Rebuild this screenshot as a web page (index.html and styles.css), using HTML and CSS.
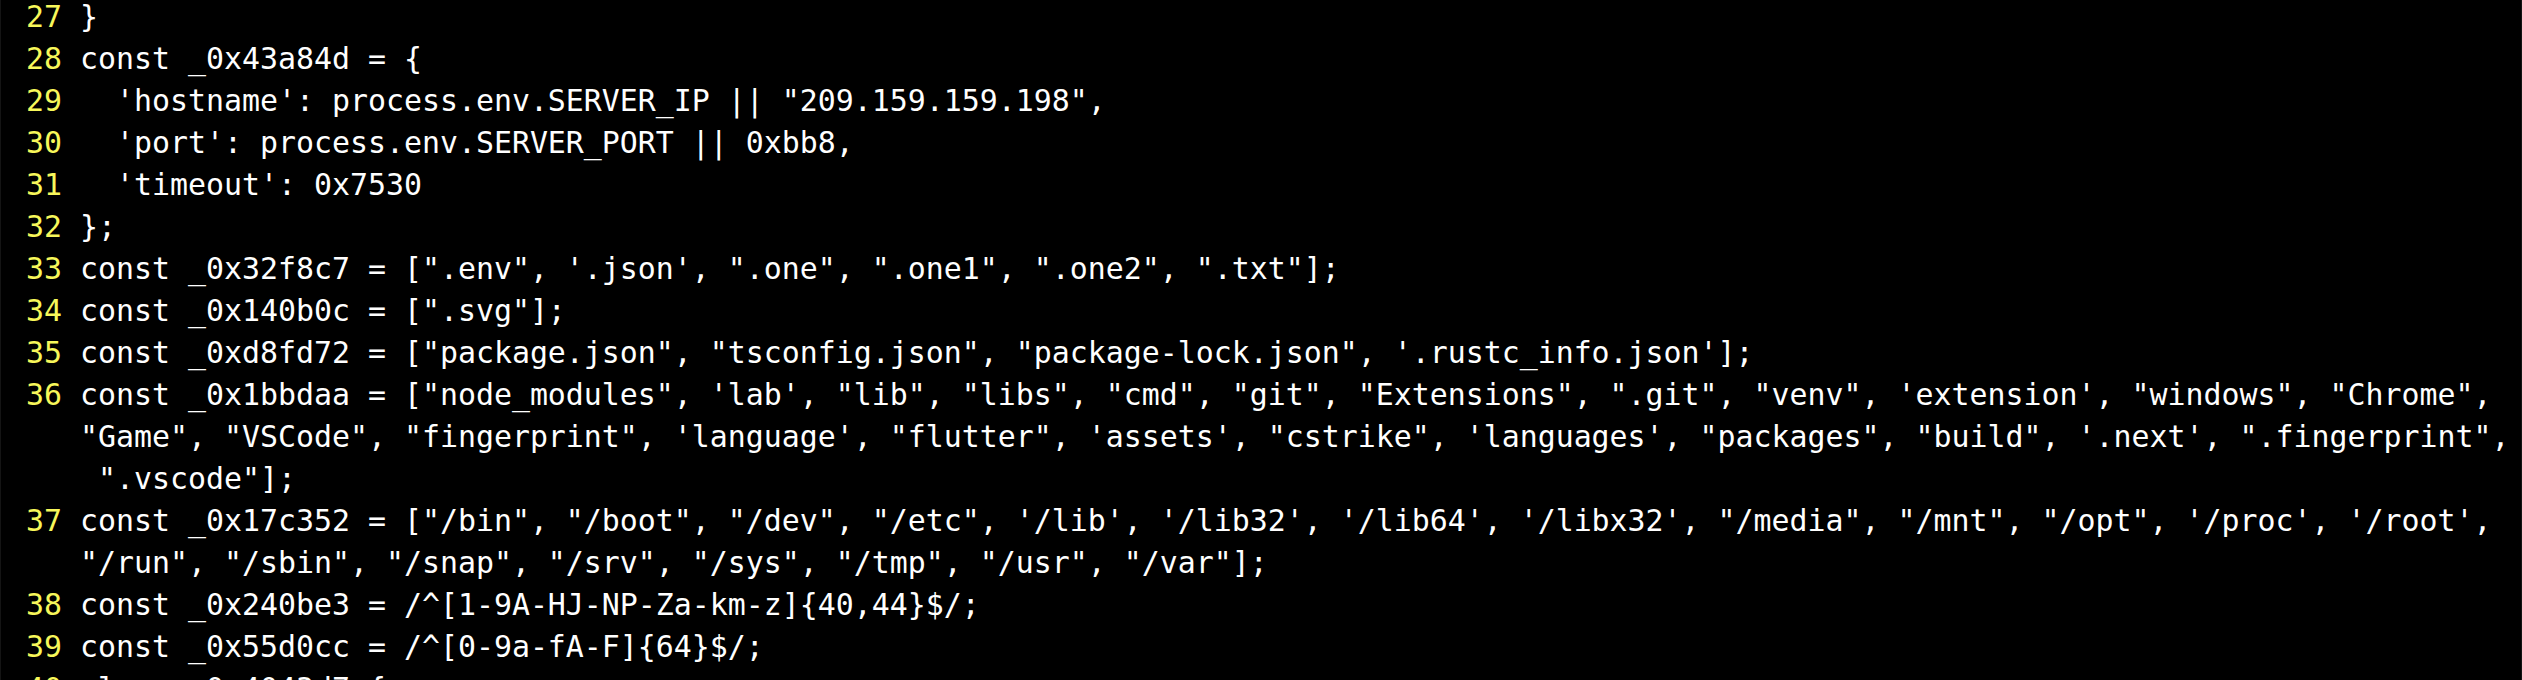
FILE: index.html
```html
<!DOCTYPE html>
<html lang="en">
<head>
<meta charset="utf-8">
<title>vim</title>
<link rel="stylesheet" href="styles.css">
</head>
<body>
<div class="screen">
<div class="row"><span class="ln"> 27 </span><span class="code">}</span></div>
<div class="row"><span class="ln"> 28 </span><span class="code">const _0x43a84d = {</span></div>
<div class="row"><span class="ln"> 29 </span><span class="code">  'hostname': process.env.SERVER_IP || "209.159.159.198",</span></div>
<div class="row"><span class="ln"> 30 </span><span class="code">  'port': process.env.SERVER_PORT || 0xbb8,</span></div>
<div class="row"><span class="ln"> 31 </span><span class="code">  'timeout': 0x7530</span></div>
<div class="row"><span class="ln"> 32 </span><span class="code">};</span></div>
<div class="row"><span class="ln"> 33 </span><span class="code">const _0x32f8c7 = [".env", '.json', ".one", ".one1", ".one2", ".txt"];</span></div>
<div class="row"><span class="ln"> 34 </span><span class="code">const _0x140b0c = [".svg"];</span></div>
<div class="row"><span class="ln"> 35 </span><span class="code">const _0xd8fd72 = ["package.json", "tsconfig.json", "package-lock.json", '.rustc_info.json'];</span></div>
<div class="row"><span class="ln"> 36 </span><span class="code">const _0x1bbdaa = ["node_modules", 'lab', "lib", "libs", "cmd", "git", "Extensions", ".git", "venv", 'extension', "windows", "Chrome", </span></div>
<div class="row"><span class="ln">    </span><span class="code">"Game", "VSCode", "fingerprint", 'language', "flutter", 'assets', "cstrike", 'languages', "packages", "build", '.next', ".fingerprint",</span></div>
<div class="row"><span class="ln">    </span><span class="code"> ".vscode"];</span></div>
<div class="row"><span class="ln"> 37 </span><span class="code">const _0x17c352 = ["/bin", "/boot", "/dev", "/etc", '/lib', '/lib32', '/lib64', '/libx32', "/media", "/mnt", "/opt", '/proc', '/root', </span></div>
<div class="row"><span class="ln">    </span><span class="code">"/run", "/sbin", "/snap", "/srv", "/sys", "/tmp", "/usr", "/var"];</span></div>
<div class="row"><span class="ln"> 38 </span><span class="code">const _0x240be3 = /^[1-9A-HJ-NP-Za-km-z]{40,44}$/;</span></div>
<div class="row"><span class="ln"> 39 </span><span class="code">const _0x55d0cc = /^[0-9a-fA-F]{64}$/;</span></div>
<div class="row"><span class="ln"> 40 </span><span class="code">class _0x4043d7 {</span></div>
</div>
</body>
</html>
```
FILE: styles.css
```css
html, body {
  margin: 0;
  padding: 0;
  background: #000;
  height: 100%;
  overflow: hidden;
}

body {
  border-left: 1px solid #141414;
  border-right: 1px solid #141414;
  box-sizing: border-box;
}

.screen {
  margin-top: -4px;
  padding-left: 7px;
  font-family: "DejaVu Sans Mono", "Liberation Mono", monospace;
  font-size: 29.9px;
  line-height: 42px;
  color: #ffffff;
}

.row {
  display: flex;
  white-space: pre;
  height: 42px;
}

.ln {
  color: #f7f75a;
}

.code {
  color: #ffffff;
}
```
